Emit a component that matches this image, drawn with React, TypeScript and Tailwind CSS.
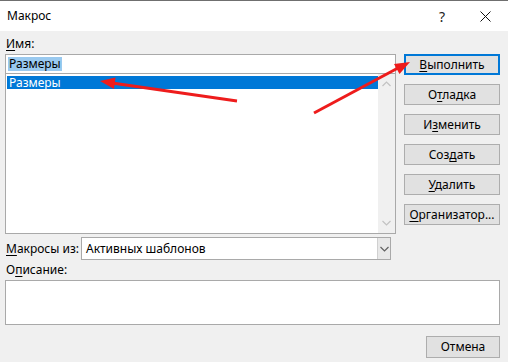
import React from 'react';

const font = { fontFamily: '"Segoe UI", "Noto Sans", sans-serif' };

const U: React.FC<{ children: React.ReactNode }> = ({ children }) => (
  <span className="underline underline-offset-[2px] decoration-1">{children}</span>
);

const Btn: React.FC<{ children: React.ReactNode; focused?: boolean; className?: string }> = ({
  children,
  focused,
  className = '',
}) => (
  <div
    className={`flex items-center justify-center bg-[#e1e1e1] text-[12px] text-black ${
      focused ? 'border-2 border-[#0078d7]' : 'border border-[#adadad]'
    } ${className}`}
  >
    {children}
  </div>
);

const Chevron: React.FC<{ up?: boolean; color?: string }> = ({ up, color = '#a6a6a6' }) => (
  <svg width="9" height="6" viewBox="0 0 9 6">
    <path d={up ? 'M0.5 5 L4.5 1 L8.5 5' : 'M0.5 1 L4.5 5 L8.5 1'} fill="none" stroke={color} strokeWidth="1.2" />
  </svg>
);

export default function App() {
  return (
    <div className="relative w-[508px] h-[362px] bg-[#f0f0f0] overflow-hidden text-black" style={font}>
      {/* title bar */}
      <div className="h-[31px] bg-white border-t border-[#6f6f6f] flex items-center">
        <span className="pl-[7px] text-[12px]">Макрос</span>
        <span className="ml-auto mr-[35px] text-[14px] text-[#222]">?</span>
        <svg width="11" height="11" viewBox="0 0 11 11" className="mr-[17px]">
          <path d="M0.5 0.5 L10.5 10.5 M10.5 0.5 L0.5 10.5" stroke="#111" strokeWidth="1" />
        </svg>
      </div>

      <div className="pl-[5px] pr-[8px]">
        <div className="flex">
          {/* left column */}
          <div className="w-[391px] flex flex-col">
            <div className="h-[23px] flex items-end pb-[1px] pl-[1px] text-[12px]">
              <span>
                <U>И</U>мя:
              </span>
            </div>
            <div className="h-[20px] bg-white border border-[#a9a9a9] flex items-center pl-[2px]">
              <span className="bg-[#99c9ef] text-[12px] leading-[14px] px-[1px]">Размеры</span>
            </div>
            <div className="h-[160px] bg-white border border-t-0 border-[#a9a9a9] flex">
              <div className="flex-1 pt-[2px] pl-[1px]">
                <div className="h-[13px] bg-[#0078d7] text-white text-[12px] leading-[13px] pl-[2px]">Размеры</div>
              </div>
              <div className="w-[17px] bg-[#f0f0f0] flex flex-col items-center justify-between pt-[7px] pb-[7px]">
                <Chevron up color="#c2c2c2" />
                <Chevron color="#c2c2c2" />
              </div>
            </div>
            <div className="h-[29px] flex items-center text-[12px]">
              <span className="w-[76px] pl-[1px]">
                <U>М</U>акросы из:
              </span>
              <div className="w-[310px] h-[23px] bg-white border border-[#a9a9a9] flex items-center">
                <span className="pl-[4px]">Активных шаблонов</span>
                <div className="ml-auto h-full w-[13px] bg-[#e8e8e8] border-l border-[#d0d0d0] flex items-center justify-center">
                  <Chevron color="#606060" />
                </div>
              </div>
            </div>
          </div>

          {/* right buttons */}
          <div className="ml-[8px] pt-[23px] flex flex-col gap-[9px]">
            <Btn focused className="w-[96px] h-[21px]">
              <span>
                <U>В</U>ыполнить
              </span>
            </Btn>
            <Btn className="w-[96px] h-[21px]">
              <span>
                О<U>т</U>ладка
              </span>
            </Btn>
            <Btn className="w-[96px] h-[21px]">
              <span>
                И<U>з</U>менить
              </span>
            </Btn>
            <Btn className="w-[96px] h-[21px]">
              <span>
                Соз<U>д</U>ать
              </span>
            </Btn>
            <Btn className="w-[96px] h-[21px]">
              <span>
                <U>У</U>далить
              </span>
            </Btn>
            <Btn className="w-[96px] h-[21px]">
              <span>
                <U>О</U>рганизатор...
              </span>
            </Btn>
          </div>
        </div>

        <div className="h-[16px] flex items-end pl-[1px] text-[12px]">
          <span>
            О<U>п</U>исание:
          </span>
        </div>
        <div className="mt-[1px] h-[45px] bg-white border border-[#a9a9a9]" />
        <div className="flex justify-end mt-[11px]">
          <Btn className="w-[74px] h-[22px]">Отмена</Btn>
        </div>
      </div>

      {/* red arrows */}
      <svg className="absolute inset-0 pointer-events-none" width="508" height="362" viewBox="0 0 508 362">
        <line x1="237" y1="101" x2="112" y2="83" stroke="#ee1c1c" strokeWidth="3" />
        <polygon points="100,81 115.5,77.5 114,89" fill="#ee1c1c" />
        <line x1="314" y1="113" x2="398" y2="68" stroke="#ee1c1c" strokeWidth="3" />
        <polygon points="410,62 399.5,74 394,64" fill="#ee1c1c" />
      </svg>
    </div>
  );
}
